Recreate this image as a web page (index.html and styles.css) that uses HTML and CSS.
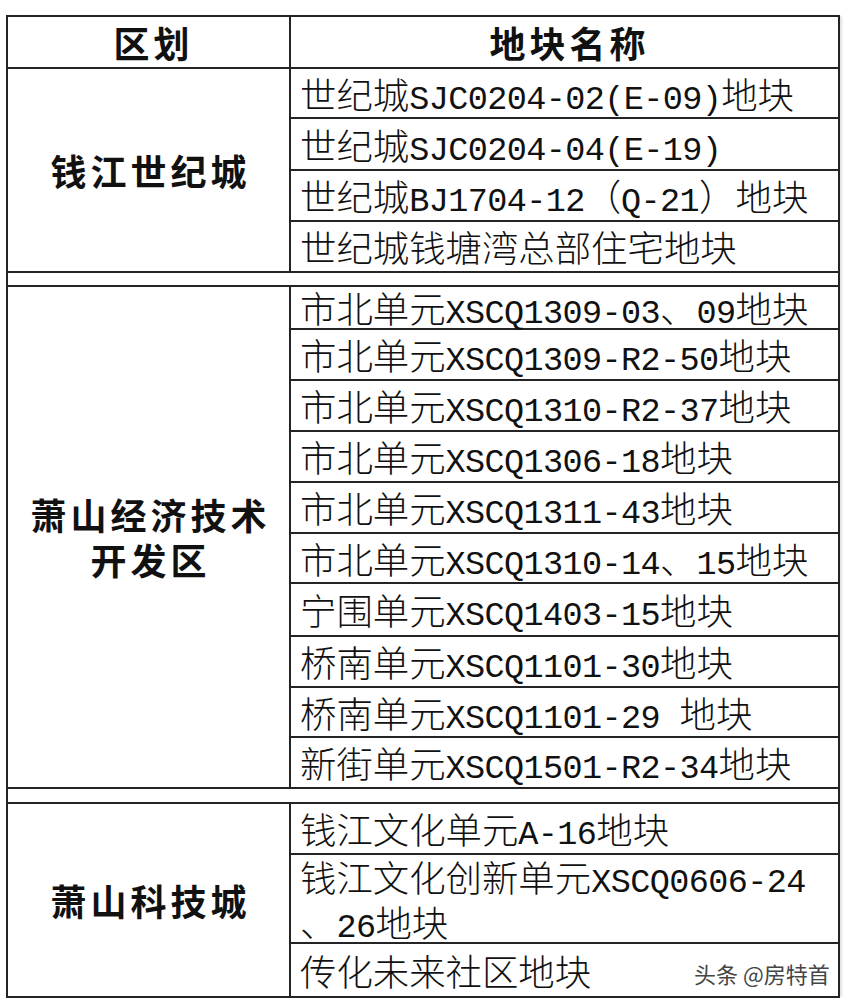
FILE: index.html
```html
<!DOCTYPE html>
<html lang="zh-CN">
<head>
<meta charset="utf-8">
<title>地块名称</title>
<link rel="stylesheet" href="styles.css">
</head>
<body>
<div class="sheet">
  <div class="table">
    <div class="cell head"><p>区划</p></div>
    <div class="cell head"><p>地块名称</p></div>

    <div class="cell area g1"><p>钱江世纪城</p></div>
    <div class="cell name"><p>世纪城<span class="lat">SJC0204-02(E-09)</span>地块</p></div>
    <div class="cell name"><p>世纪城<span class="lat">SJC0204-04(E-19)</span></p></div>
    <div class="cell name"><p>世纪城<span class="lat">BJ1704-12</span>（<span class="lat">Q-21</span>）地块</p></div>
    <div class="cell name"><p>世纪城钱塘湾总部住宅地块</p></div>

    <div class="cell spacer"></div>

    <div class="cell area g2"><p>萧山经济技术<br>开发区</p></div>
    <div class="cell name"><p>市北单元<span class="lat">XSCQ1309-03</span>、<span class="lat">09</span>地块</p></div>
    <div class="cell name"><p>市北单元<span class="lat">XSCQ1309-R2-50</span>地块</p></div>
    <div class="cell name"><p>市北单元<span class="lat">XSCQ1310-R2-37</span>地块</p></div>
    <div class="cell name"><p>市北单元<span class="lat">XSCQ1306-18</span>地块</p></div>
    <div class="cell name"><p>市北单元<span class="lat">XSCQ1311-43</span>地块</p></div>
    <div class="cell name"><p>市北单元<span class="lat">XSCQ1310-14</span>、<span class="lat">15</span>地块</p></div>
    <div class="cell name"><p>宁围单元<span class="lat">XSCQ1403-15</span>地块</p></div>
    <div class="cell name"><p>桥南单元<span class="lat">XSCQ1101-30</span>地块</p></div>
    <div class="cell name"><p>桥南单元<span class="lat">XSCQ1101-29 </span>地块</p></div>
    <div class="cell name"><p>新街单元<span class="lat">XSCQ1501-R2-34</span>地块</p></div>

    <div class="cell spacer"></div>

    <div class="cell area g3"><p>萧山科技城</p></div>
    <div class="cell name"><p>钱江文化单元<span class="lat">A-16</span>地块</p></div>
    <div class="cell name"><p>钱江文化创新单元<span class="lat">XSCQ0606-24</span><br>、<span class="lat">26</span>地块</p></div>
    <div class="cell name"><p>传化未来社区地块</p></div>
  </div>
  <div class="watermark">头条 @房特首</div>
</div>
</body>
</html>
```

FILE: styles.css
```css
html, body {
  margin: 0;
  padding: 0;
  background: #ffffff;
}

body {
  font-family: "Noto Sans CJK SC", "Noto Sans", sans-serif;
  color: #111111;
}

.sheet {
  position: relative;
  padding: 15px 0 0 6px;
  height: 989px;
}

.table {
  display: grid;
  width: max-content;
  grid-template-columns: 281px 547px;
  grid-template-rows:
    50px 48px 50px 49px 49px
    12px
    41px 49px 49px 49px 49px 48px 51px 49px 48px 49px
    13px
    49px 87px 52px;
  gap: 2px;
  padding: 2px;
  background: #242424;
  box-shadow: 3px 0 2px -1px rgba(0, 0, 0, 0.12);
}

.cell {
  background: #ffffff;
  display: flex;
  align-items: center;
}

.cell p {
  margin: 0;
}

.head,
.area {
  justify-content: center;
  text-align: center;
  font-weight: 700;
  font-size: 36px;
  line-height: 45px;
  letter-spacing: 4px;
}

.head p {
  padding-left: 10px;
}

.area p {
  padding-left: 4px;
}

.g1 { grid-row: span 4; }
.g2 { grid-row: span 10; }
.g3 { grid-row: span 3; }

.spacer {
  grid-column: 1 / -1;
}

.name {
  padding-left: 9px;
  font-size: 36.4px;
  font-weight: 300;
  line-height: 45px;
  white-space: nowrap;
}

.lat {
  font-family: "Liberation Mono", "DejaVu Sans Mono", monospace;
  font-size: 33.5px;
  font-weight: 400;
  letter-spacing: -0.6px;
  line-height: 0;
  white-space: pre;
}

.watermark {
  position: absolute;
  left: 694px;
  top: 957px;
  font-size: 22px;
  color: #454545;
  white-space: nowrap;
  text-shadow: 0 0 2px #ffffff, 0 0 1px #ffffff;
}
```
